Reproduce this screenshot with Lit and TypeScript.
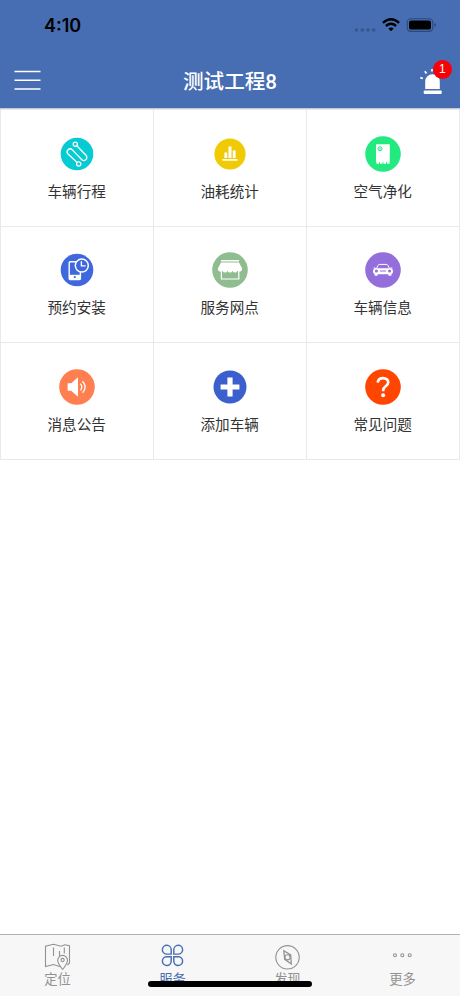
import { LitElement, html, svg, css } from "lit";
import { customElement, property } from "lit/decorators.js";

const services = [
  {
    label: "车辆行程",
    color: "#06cbd2",
    r: 16.3,
    art: svg`<g fill="none" stroke="#fff" stroke-width="1.3">
      <circle cx="16.3" cy="8.2" r="2.1"/><circle cx="19.7" cy="28" r="2.1"/>
      <path d="M17.8 9.8L27 19.3a3 3 0 0 1-4.4 4.2L13.3 13.9a2.9 2.9 0 0 0-4.3 4.1L18.2 26.5"/></g>`,
  },
  {
    label: "油耗统计",
    color: "#f0cb05",
    r: 15.6,
    art: svg`<path fill="#fff" d="M12.4 16.6h2.8v5.3h-2.8zM16.5 10.6h3v11.3h-3zM20.8 14.6h2.8v7.3h-2.8zM10.4 22.900h15.2v1.900H10.4z"/>`,
  },
  {
    label: "空气净化",
    color: "#22ea80",
    r: 17.8,
    art: svg`<rect x="11" y="8.3" width="13.8" height="17.6" rx=".6" fill="#fff"/>
      <path d="M11.400 26.900h13.200" stroke="#fff" stroke-width="1.6" stroke-dasharray="2.600 .9"/>
      <circle cx="15" cy="12.8" r="2" fill="none" stroke="#22ea80"/><path d="M15 11.6v2.4M13.8 12.8h2.4" stroke="#22ea80" stroke-width=".5"/>`,
  },
  {
    label: "预约安装",
    color: "#4068de",
    r: 16.3,
    art: svg`<path d="M17 9.7H11.2a1 1 0 0 0-1 1V26.5a1 1 0 0 0 1 1H20.4a1 1 0 0 0 1-1V20" fill="none" stroke="#fff" stroke-width="1.4"/>
      <path d="M10 22.8h11.5v4.8H10z" fill="#fff"/><circle cx="15.8" cy="25.1" r="1.1" fill="#4068de"/>
      <circle cx="22.8" cy="13.6" r="6.5" fill="#4068de" stroke="#fff" stroke-width="1.5"/>
      <path d="M22.4 9.2v4.7h4.2" fill="none" stroke="#fff" stroke-width="1.4"/>`,
  },
  {
    label: "服务网点",
    color: "#8fbd90",
    r: 17.8,
    art: svg`<path fill="#fff" d="M9 7.9h18v1.7H9zM9 10.6h18l3 5.7v1.1a2.5 2.5 0 0 1-4.5 1.3 2.6 2.6 0 0 1-5 0 2.6 2.6 0 0 1-5 0 2.6 2.6 0 0 1-5 0A2.5 2.5 0 0 1 6 17.4v-1.1z"/>
      <path d="M9.4 19v8h17.4v-8" fill="none" stroke="#fff" stroke-width="1.2"/>`,
  },
  {
    label: "车辆信息",
    color: "#946edb",
    r: 17.8,
    art: svg`<path d="M11.2 17l2-3.8q.5-.8 1.6-.8h6.4q1.1 0 1.6.8l2 3.8" fill="none" stroke="#fff" stroke-width="1"/>
      <path fill="#fff" d="M10.8 16.3h14.4q2.8.3 2.8 3.1 0 2.2-1.6 2.7v1.7h-3v-1.5H12.6v1.5h-3v-1.7Q8 21.6 8 19.4q0-2.8 2.8-3.1z"/>
      <circle cx="11.4" cy="19.1" r="1.5" fill="#946edb"/><circle cx="24.6" cy="19.1" r="1.5" fill="#946edb"/>
      <path d="M15 19h6" stroke="#946edb" stroke-width="1"/><path d="M8.6 16h2M25.4 16h2" stroke="#fff" stroke-width="1"/>`,
  },
  {
    label: "消息公告",
    color: "#ff7f50",
    r: 17.8,
    art: svg`<path fill="#fff" d="M9.2 14.3h3L19 8.3v19.4l-6.8-6H9.2q-.6 0-.6-.6v-6.2q0-.6.6-.6z"/>
      <path d="M21.4 14.6q2.8 3.4 0 6.8M23.5 12.3q5.2 5.7 0 11.4" fill="none" stroke="#fff" stroke-width="1.3"/>`,
  },
  {
    label: "添加车辆",
    color: "#3b5fcd",
    r: 16.5,
    art: svg`<path d="M18 8.6v18.8M8.6 18h18.8" stroke="#fff" stroke-width="5.2"/>`,
  },
  {
    label: "常见问题",
    color: "#ff4500",
    r: 17.8,
    art: svg`<path d="M12.8 13.6c.2-3 2.4-4.5 5.2-4.5 3.2 0 5.2 1.8 5.2 4.3 0 3.8-5 3.9-5 7.6v1.3" fill="none" stroke="#fff" stroke-width="2.7"/>
      <circle cx="18.1" cy="26.2" r="2" fill="#fff"/>`,
  },
];

const tabs = [
  {
    label: "定位",
    art: svg`<path d="M18 24.5H15.5l-6-2-8 2V4.2l8-2 7.5 2 4-1.5 4.5 1V21l-2 2M9.5 5.5v8.5M15.5 9v5M20.3 5.5v6"/>
      <path fill="#f7f7f7" d="M18.6 27.5q-4.9-6-4.9-9.2a4.9 4.9 0 0 1 9.8 0q0 3.2-4.9 9.2z"/><circle cx="18.6" cy="18" r="1.6"/>`,
  },
  {
    label: "服务",
    active: true,
    art: svg`<g stroke-width="1.45"><path d="M12.2 12.1H7.4A4.4 4.4 0 1 1 12.2 7.7zM14.8 12.1h4.8A4.4 4.4 0 1 0 14.8 7.7zM12.2 14.7H7.4A4.4 4.4 0 1 0 12.2 19.1zM14.8 14.7h4.8A4.4 4.4 0 1 1 14.8 19.1z"/></g>`,
  },
  {
    label: "发现",
    art: svg`<circle cx="13.5" cy="15.3" r="11.7"/><path d="M9.8 8.8l6.9 4.2.6 9-6.600-4.600z" stroke-width="1.3"/><circle cx="13.5" cy="15.3" r="2.6"/>`,
  },
  {
    label: "更多",
    art: svg`<circle cx="6" cy="13.2" r="1.5"/><circle cx="13.3" cy="13.2" r="1.5"/><circle cx="20.7" cy="13.2" r="1.5"/>`,
  },
];

@customElement("service-tile")
class ServiceTile extends LitElement {
  @property({ attribute: false }) item: any;
  static styles = css`
    :host { display: flex; flex-direction: column; align-items: center; padding: 25.5px 0.6px 0 0; background: #fff; }
    svg { display: block; width: 36px; height: 36px; }
    .label { margin-top: 9px; font-size: 14.6px; line-height: 22px; color: #333; }
  `;
  render() {
    const { color, r, art, label } = this.item;
    return html`<svg viewBox="0 0 36 36"><circle cx="18" cy="18" r=${r} fill=${color}></circle>${art}</svg>
      <div class="label">${label}</div>`;
  }
}

@customElement("app-root")
class AppRoot extends LitElement {
  static styles = css`
    :host {
      display: flex; flex-direction: column; position: relative; height: 996px; overflow: hidden;
      background: #fff; font-family: "Liberation Sans", "Noto Sans CJK SC", sans-serif;
    }
    .top { background: #476eb2; height: 108px; flex: none; border-bottom: 1px solid #c3c9d4; color: #fff; }
    .status { height: 51px; display: flex; align-items: center; padding: 0 23px 0 44px; justify-content: space-between; }
    .time { font: 600 18px/22px Inter, sans-serif; color: #000; }
    .signals { width: 84px; height: 20px; display: block; margin-bottom: 1px; }
    .nav { height: 57px; display: grid; grid-template-columns: 60px 1fr 60px; align-items: center; }
    .menu { margin-left: 14px; width: 27px; height: 22px; display: block; }
    .title { text-align: center; font-size: 20.6px; font-weight: 500; line-height: 30px; padding-top: 5px; }
    .digit { font-family: Roboto, "Liberation Sans", sans-serif; }
    .alarm { position: relative; justify-self: end; width: 44px; height: 44px; margin-bottom: 2px; }
    .alarm svg { display: block; }
    .badge {
      position: absolute; right: 8px; top: 3px; width: 19.5px; height: 19.5px; border-radius: 50%;
      background: #f90006; font-size: 12px; line-height: 19.5px; text-align: center;
    }
    .grid {
      flex: none; height: 349px; padding: 1px; background: #e9e9ea;
      display: grid; grid-template: repeat(3, 1fr) / repeat(3, 1fr); gap: 1px;
    }
    .space { flex: 1; }
    .tabs { height: 61px; flex: none; display: grid; grid-template-columns: repeat(4, 1fr); background: #f7f7f7; border-top: 1.5px solid #b2b2b2; }
    .tab { display: flex; flex-direction: column; align-items: center; padding-top: 7px; color: #929292; }
    .tab svg { width: 27px; height: 28px; fill: none; stroke: currentColor; stroke-width: 1.1; display: block; }
    .tab .name { font-size: 13.3px; line-height: 20px; }
    .tab.active { color: #476eb2; }
    .home { position: absolute; left: 148px; bottom: 9px; width: 164px; height: 6px; border-radius: 3px; background: #000; }
  `;
  render() {
    return html`
      <div class="top">
        <div class="status">
          <div class="time">4:10</div>
          <svg class="signals" viewBox="353 15 84 20">
            <g fill="#35568f"><circle cx="356.5" cy="30" r="1.8"/><circle cx="362.3" cy="30" r="1.8"/><circle cx="368" cy="30" r="1.8"/><circle cx="373.7" cy="30" r="1.8"/></g>
            <g fill="none" stroke="#000" stroke-width="2.4"><path d="M382.9 22.8q8.1-7 16.2 0"/><path d="M385.9 26q5.1-4.3 10.2 0"/></g>
            <path d="M388.3 28.5q2.7-2 5.4 0L391 31.3z"/>
            <rect x="407.2" y="18.7" width="25.6" height="12.7" rx="3.8" fill="none" stroke="#2c477a" stroke-width="1.1"/>
            <rect x="409" y="20.4" width="22" height="9.2" rx="2.2"/><path d="M434.5 23v4q1.5-.5 1.5-2t-1.5-2z" fill="#2c477a"/>
          </svg>
        </div>
        <div class="nav">
          <svg class="menu" viewBox="0 0 27 22"><path d="M.5 2.5h26M.5 11.2h26M.5 19.9h26" stroke="#fff" stroke-width="1.5"/></svg>
          <div class="title">测试工程<span class="digit">8</span></div>
          <div class="alarm">
            <svg width="44" height="44" viewBox="416 57 44 44" fill="#fff">
              <path d="M425.2 89v-7.5a7.3 7.3 0 0 1 14.6 0V89z"/><rect x="423.7" y="90.4" width="18" height="3.5" rx="1"/>
              <path d="M420.3 77.6l2.6.9M424.8 71.3l1.7 2.2M432 69v2.6" stroke="#fff" stroke-width="1.7"/>
            </svg>
            <div class="badge">1</div>
          </div>
        </div>
      </div>
      <div class="grid">${services.map((s) => html`<service-tile .item=${s}></service-tile>`)}</div>
      <div class="space"></div>
      <div class="tabs">
        ${tabs.map((t) => html`<div class="tab ${t.active ? "active" : ""}"><svg viewBox="0 0 27 28">${t.art}</svg><div class="name">${t.label}</div></div>`)}
      </div>
      <div class="home"></div>
    `;
  }
}
